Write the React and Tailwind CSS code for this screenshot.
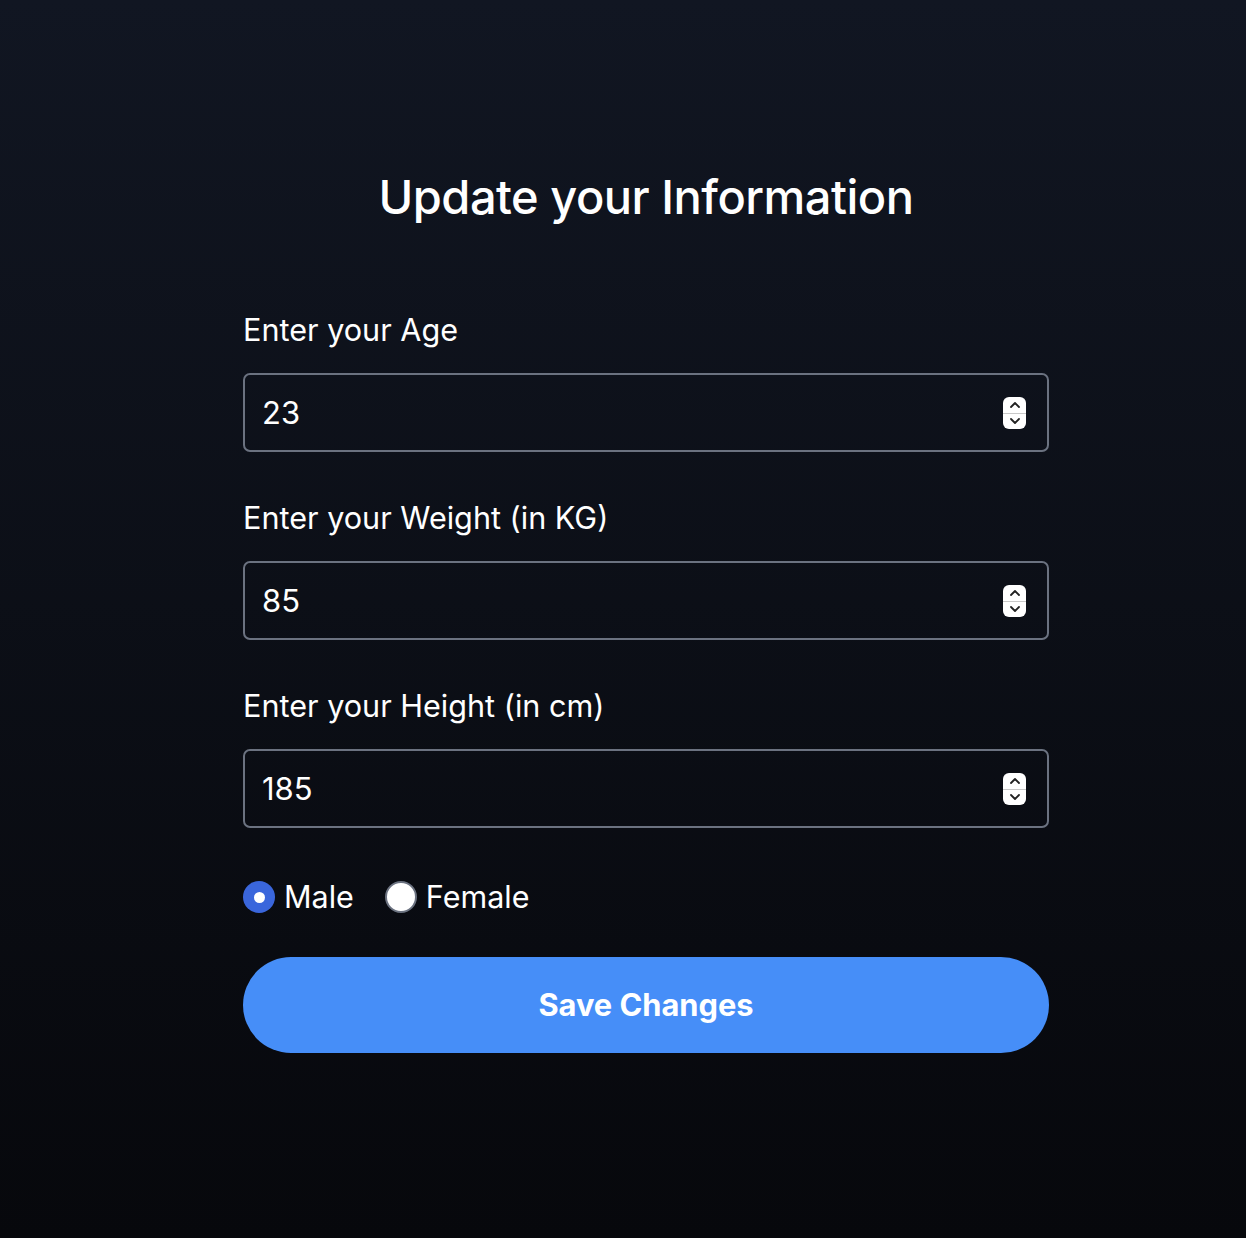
import React from "react";

function Spinner() {
  return (
    <div className="absolute right-[21px] top-1/2 -translate-y-1/2 w-[23px] h-[32px] rounded-[6px] bg-white flex flex-col items-center justify-between py-[3px]">
      <svg width="14" height="10" viewBox="0 0 14 10" fill="none">
        <path d="M3 7 L7 3 L11 7" stroke="#222" strokeWidth="1.8" strokeLinecap="round" strokeLinejoin="round" />
      </svg>
      <div className="absolute left-0 right-0 top-1/2 h-px bg-[#c8c8c8]" />
      <svg width="14" height="10" viewBox="0 0 14 10" fill="none">
        <path d="M3 3 L7 7 L11 3" stroke="#222" strokeWidth="1.8" strokeLinecap="round" strokeLinejoin="round" />
      </svg>
    </div>
  );
}

function Field({ label, value, first }) {
  return (
    <div className={first ? "flex flex-col" : "flex flex-col mt-[48px]"}>
      <label className="text-[30.6px] leading-[36px] text-white">{label}</label>
      <div className="relative mt-[25px] h-[79px] rounded-[7px] border-2 border-[#6b7280] bg-transparent">
        <input
          type="text"
          readOnly
          value={value}
          className="w-full h-full bg-transparent outline-none pl-[17px] text-[31px] text-white"
          style={{ fontFamily: "Inter, sans-serif" }}
        />
        <Spinner />
      </div>
    </div>
  );
}

export default function App() {
  return (
    <div
      className="min-h-[1238px] w-full bg-gradient-to-b from-[#111622] to-[#07080c] text-white"
      style={{ fontFamily: "Inter, 'Noto Sans', sans-serif" }}
    >
      <div className="pl-[243px] w-[1049px] pt-[173px] pb-[186px] flex flex-col">
        <h1 className="text-center text-[47px] leading-[48px] font-medium tracking-[-0.5px] text-white">
          Update your Information
        </h1>
        <div className="mt-[91px] flex flex-col">
          <Field label="Enter your Age" value="23" first />
          <Field label="Enter your Weight (in KG)" value="85" />
          <Field label="Enter your Height (in cm)" value="185" />
        </div>
        <div className="mt-[53px] flex items-center h-[32px]">
          <div className="flex items-center">
            <div className="w-[32px] h-[32px] rounded-full bg-[#3a66dc] flex items-center justify-center">
              <div className="w-[11px] h-[11px] rounded-full bg-white" />
            </div>
            <span className="ml-[9px] text-[30.5px] leading-[36px] text-white">Male</span>
          </div>
          <div className="flex items-center ml-[31px]">
            <div className="w-[32px] h-[32px] rounded-full bg-white border-2 border-[#6b7280]" />
            <span className="ml-[9px] text-[30.5px] leading-[36px] text-white">Female</span>
          </div>
        </div>
        <button className="mt-[44px] h-[96px] w-full rounded-full bg-[#468ef8] text-white text-[30.8px] font-bold">
          Save Changes
        </button>
      </div>
    </div>
  );
}
